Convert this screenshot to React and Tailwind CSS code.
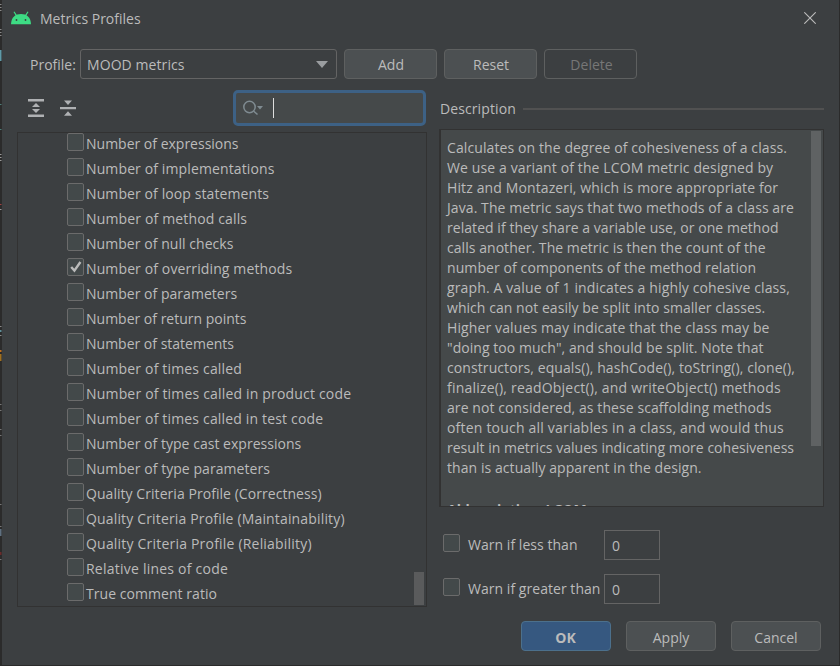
import React from "react";

const metrics = [
  ["Number of expressions", "tracking-normal"],
  ["Number of implementations", "tracking-[0.12px]"],
  ["Number of loop statements", "tracking-[0.1px]"],
  ["Number of method calls", "tracking-[0.15px]"],
  ["Number of null checks", "tracking-[0.05px]"],
  ["Number of overriding methods", "tracking-[0.12px]"],
  ["Number of parameters", "tracking-[0.03px]"],
  ["Number of return points", "tracking-normal"],
  ["Number of statements", "tracking-normal"],
  ["Number of times called", "tracking-[0.17px]"],
  ["Number of times called in product code", "tracking-[0.18px]"],
  ["Number of times called in test code", "tracking-[0.17px]"],
  ["Number of type cast expressions", "tracking-[0.03px]"],
  ["Number of type parameters", "tracking-[0.05px]"],
  ["Quality Criteria Profile (Correctness)", "tracking-[0.05px]"],
  ["Quality Criteria Profile (Maintainability)", "tracking-[0.16px]"],
  ["Quality Criteria Profile (Reliability)", "tracking-[0.2px]"],
  ["Relative lines of code", "tracking-[0.23px]"],
  ["True comment ratio", "tracking-[0.05px]"],
];

const description = [
  ["Calculates on the degree of cohesiveness of a class.", "tracking-[0.1px]"],
  ["We use a variant of the LCOM metric designed by", "tracking-[0.12px]"],
  ["Hitz and Montazeri, which is more appropriate for", "tracking-[0.12px]"],
  ["Java. The metric says that two methods of a class are", "tracking-[0.08px]"],
  ["related if they share a variable use, or one method", "tracking-[0.05px]"],
  ["calls another. The metric is then the count of the", "tracking-[0.05px]"],
  ["number of components of the method relation", "tracking-[0.09px]"],
  ["graph. A value of 1 indicates a highly cohesive class,", "tracking-[0.13px]"],
  ["which can not easily be split into smaller classes.", "tracking-[0.05px]"],
  ["Higher values may indicate that the class may be", "tracking-[0.12px]"],
  ["\"doing too much\", and should be split. Note that", "tracking-[0.05px]"],
  ["constructors, equals(), hashCode(), toString(), clone(),", "tracking-[0.09px]"],
  ["finalize(), readObject(), and writeObject() methods", "tracking-[0.2px]"],
  ["are not considered, as these scaffolding methods", "tracking-[0.08px]"],
  ["often touch all variables in a class, and would thus", "tracking-[0.2px]"],
  ["result in metrics values indicating more cohesiveness", "tracking-[0.02px]"],
  ["than is actually apparent in the design.", "tracking-[0.07px]"],
];

// Slivers of editor text that show past the dialog's left edge: [y, height, colour]
const editorMarks = [
  [4, 1, "#8a8a8a"], [7, 1, "#8a8a8a"], [10, 1, "#8a8a8a"],
  [29, 1, "#8a8a8a"], [32, 1, "#8a8a8a"], [35, 1, "#8a8a8a"],
  [50, 11, "#5f9aa8"], [104, 1, "#4f7f7a"], [129, 1, "#4f7f7a"],
  [154, 1, "#9a9a9a"], [157, 1, "#9a9a9a"], [160, 1, "#9a9a9a"],
  [204, 1, "#a04040"], [209, 1, "#9a9a9a"],
  [326, 1, "#8a8a8a"], [330, 2, "#5f8f9a"], [335, 1, "#8a8a8a"],
  [350, 2, "#c07020"], [354, 7, "#a07020"],
  [404, 1, "#777777"], [410, 1, "#777777"], [429, 1, "#777777"], [435, 1, "#777777"],
  [504, 1, "#777777"], [526, 1, "#777777"], [529, 7, "#5f7080"],
  [552, 3, "#6b2b2b"], [559, 1, "#777777"],
];

function Checkbox({ checked }) {
  return (
    <span className="flex h-[18px] w-[17px] shrink-0 items-center justify-center rounded-[2px] border border-[#6b6b6b] bg-[#43494a]">
      {checked && (
        <svg width="14" height="14" viewBox="0 0 14 14" fill="none" stroke="#bbbbbb" strokeWidth="2.4">
          <path d="M2.2 7 L5.4 10.6 L11.4 2" />
        </svg>
      )}
    </span>
  );
}

function Button({ children, className }) {
  return (
    <button className={`flex h-[30px] items-center justify-center rounded-[4px] border ${className}`}>
      {children}
    </button>
  );
}

function WarnRow({ label }) {
  return (
    <div className="flex h-[30px] items-center">
      <div className="-mt-1"><Checkbox /></div>
      <span className="ml-[8px] w-[136px] whitespace-nowrap tracking-[0.04px]">{label}</span>
      <div className="flex h-[30px] w-[56px] items-center border border-[#646464] bg-[#3c3f41] pl-[7px] pt-px">0</div>
    </div>
  );
}

export default function App() {
  return (
    <div className="flex h-[666px] w-[840px] overflow-hidden border-r border-b border-[#2b2b2b] bg-[#3c3f41] font-['Open_Sans','Noto_Sans',sans-serif] text-[14px] leading-5 text-[#bbbbbb]">
      <svg width="2" height="665" viewBox="0 0 2 665" className="shrink-0 bg-[#2b2b2b]">
        {editorMarks.map(([y, height, fill]) => (
          <rect key={y} x="0" y={y} width="1.5" height={height} fill={fill} />
        ))}
      </svg>
      <div className="flex min-w-0 flex-1 flex-col">
        <header className="flex h-[37px] items-center pl-[9px] pr-[23px]">
          <svg width="20" height="14" viewBox="0 0 20 14" className="-mt-px">
            <path d="M3 .7 5.3 4.4M17 .7 14.7 4.4" stroke="#3ddc84" strokeWidth="1.2" />
            <path d="M0 13.300C.3 6 4.500 3 10 3s9.700 3 10 10.300Z" fill="#3ddc84" />
            <circle cx="5.500" cy="9" r=".9" fill="#3c3f41" />
            <circle cx="14.500" cy="9" r=".9" fill="#3c3f41" />
          </svg>
          <h1 className="ml-[9px] flex-1">Metrics Profiles</h1>
          <svg width="12" height="12" viewBox="0 0 12 12" stroke="#bbbbbb" strokeWidth="1.1" className="-mt-px">
            <path d="M.3 .3 11.700 11.700M11.700 .3 .3 11.700" />
          </svg>
        </header>

        <div className="mt-3 flex h-[30px] items-center pl-7">
          <span className="w-[50px] whitespace-nowrap pt-px">Profile:</span>
          <div className="flex h-[30px] w-[257px] items-center justify-between rounded-[3px] border border-[#646464] pl-[6px] pr-[8px]">
            <span className="pt-px tracking-[0.08px]">MOOD metrics</span>
            <svg width="12" height="7" viewBox="0 0 12 7"><path d="M0 0h12L6 7Z" fill="#9a9da0" /></svg>
          </div>
          <Button className="ml-[7px] w-[93px] border-[#5e6060] bg-[#4c5052] pl-px pt-px">Add</Button>
          <Button className="ml-[7px] w-[93px] border-[#5e6060] bg-[#4c5052] pl-px pt-px">Reset</Button>
          <Button className="ml-[7px] w-[93px] border-[#5e6060] pl-[2px] pt-px text-[#777777]">Delete</Button>
        </div>

        <div className="mt-[11px] flex">
          <section className="ml-[15px] w-[410px]">
            <div className="flex h-[36px] items-center pl-[11px]">
              <svg width="16" height="18" viewBox="0 0 16 18" fill="#afb1b3">
                <path d="M0 0h16v2.5H0ZM0 15.500h16V18H0ZM8 4l4 4H4ZM8 14l4-4H4Z" />
              </svg>
              <svg width="16" height="18" viewBox="0 0 16 18" fill="#afb1b3" className="ml-4">
                <path d="M0 8h16v2.300H0ZM8 6l4-4.500H4ZM8 12.200l4 4.500H4Z" />
              </svg>
              <div className="ml-[157px] flex h-[36px] w-[193px] items-center rounded-[5px] border-[3px] border-[#3d6185] bg-[#45494a] pl-[7px]">
                <svg width="22" height="18" viewBox="0 0 22 18" fill="none" stroke="#7f8b91" strokeWidth="1.5">
                  <circle cx="6.500" cy="8" r="5.700" />
                  <path d="m10.500 12 4 3.500" />
                  <path d="M14 7h6l-3 3.500Z" fill="#7f8b91" stroke="none" />
                </svg>
                <span className="ml-[8px] h-5 w-px bg-[#dddddd]" />
              </div>
            </div>
            <div className="mt-[6px] flex h-[475px] justify-between border border-[#323232]">
              <ul className="-mt-[2px] pl-[49px]">
                {metrics.map(([name, tracking]) => (
                  <li key={name} className="flex h-[25px] items-center whitespace-nowrap">
                    <div className="-mt-[3px]"><Checkbox checked={name === "Number of overriding methods"} /></div>
                    <span className={`ml-[2px] ${tracking}`}>{name}</span>
                  </li>
                ))}
              </ul>
              <div className="mr-[2px] mb-px h-[33px] w-[10px] self-end bg-[#5a5b5c]" />
            </div>
          </section>

          <section className="ml-[12px] w-[385px]">
            <div className="flex h-[39px] items-center pb-[2px] pl-px">
              <h2 className="w-[83px] whitespace-nowrap tracking-[0.1px]">Description</h2>
              <div className="h-[2px] flex-1 bg-[#515151]" />
            </div>
            <div className="flex h-[378px] justify-between overflow-hidden border border-l-2 border-[#323232] bg-[#45494a]">
              <div className="pl-[6px] pt-[8px]">
                {description.map(([line, tracking]) => (
                  <p key={line} className={`h-5 whitespace-nowrap ${tracking}`}>{line}</p>
                ))}
                <p className="mt-[22px] h-5 whitespace-nowrap font-bold">Abbreviation: LCOM</p>
              </div>
              <div className="mr-[2px] mt-px h-[315px] w-[10px] shrink-0 bg-[#5f6263]" />
            </div>
            <div className="mt-[23px] flex flex-col gap-[14px] pl-[4px]">
              <WarnRow label="Warn if less than" />
              <WarnRow label="Warn if greater than" />
            </div>
          </section>
        </div>

        <footer className="mt-[14px] flex justify-end gap-[15px] pr-[18px]">
          <Button className="w-[90px] border-[#4c708c] bg-[#365880] pr-px pt-[3px] font-bold">OK</Button>
          <Button className="w-[90px] border-[#5e6060] bg-[#4c5052] pt-[3px]">Apply</Button>
          <Button className="w-[90px] border-[#5e6060] bg-[#4c5052] pt-[3px]">Cancel</Button>
        </footer>
      </div>
    </div>
  );
}
